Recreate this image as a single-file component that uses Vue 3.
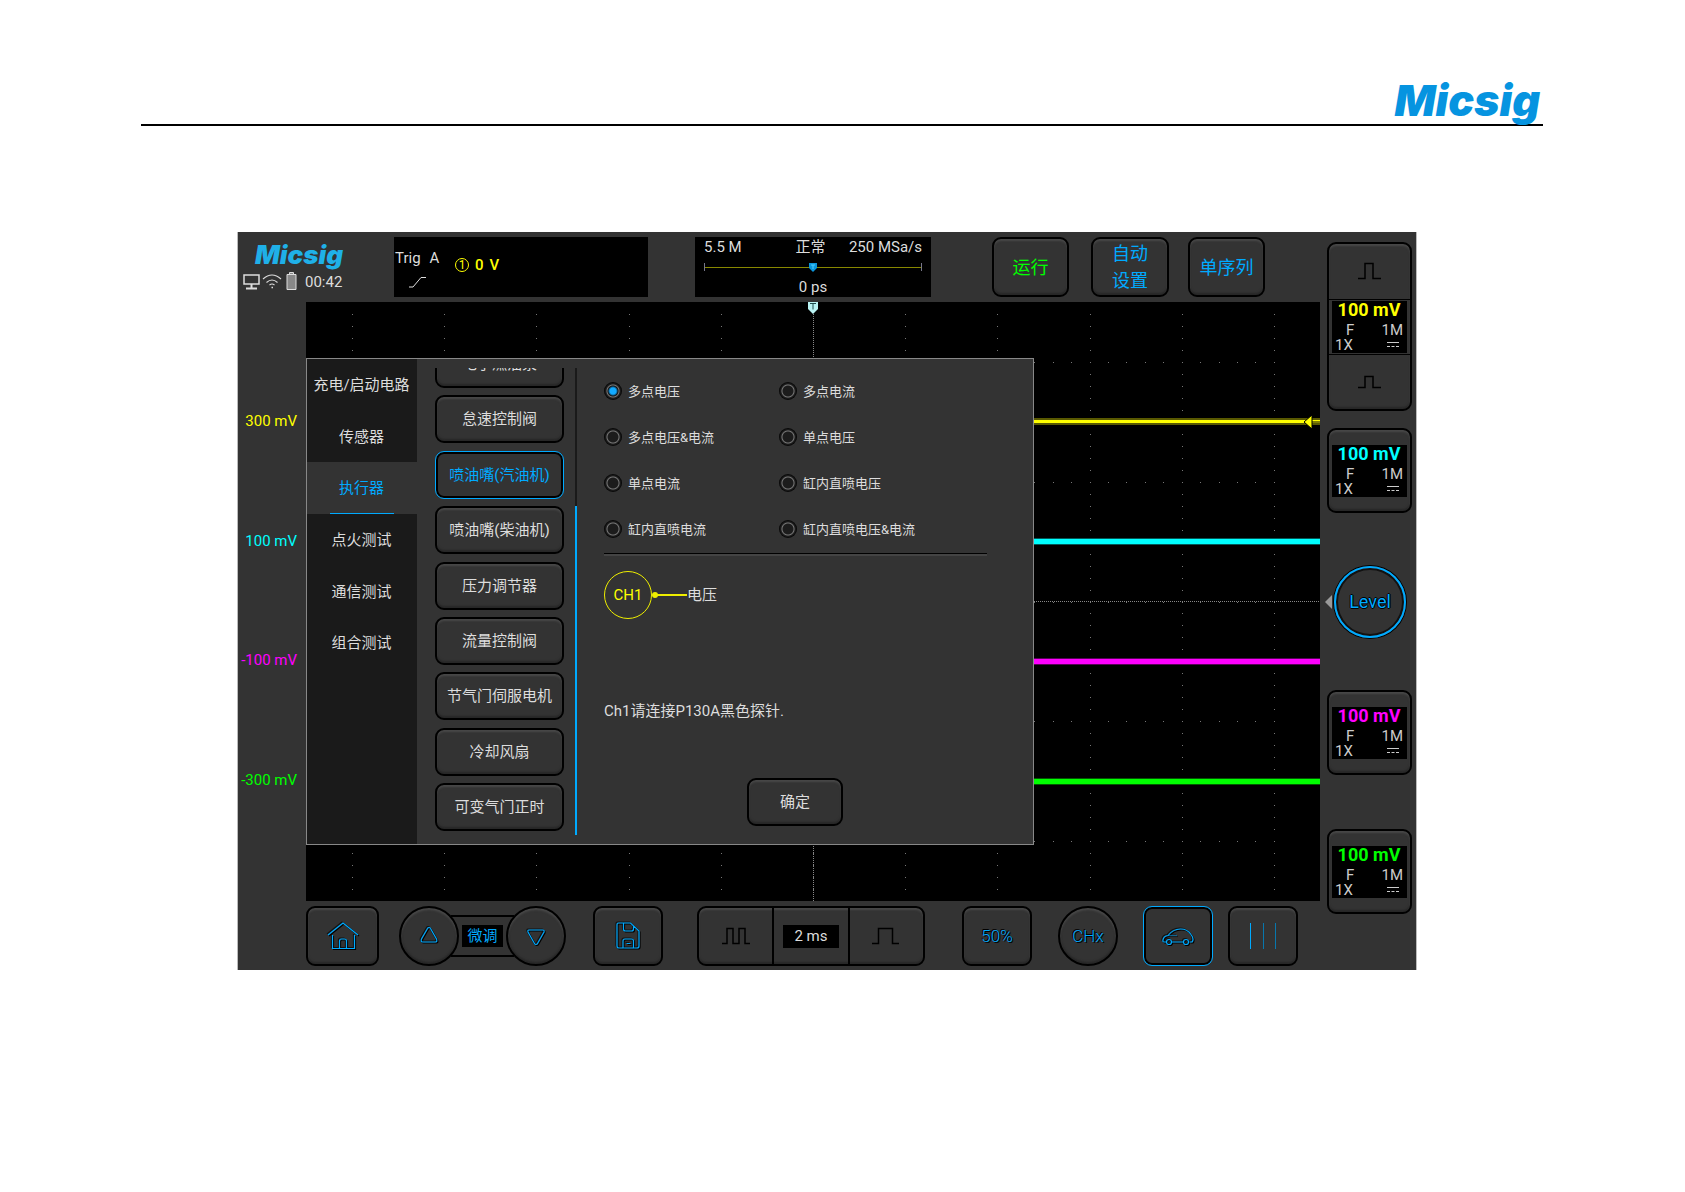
<script setup>
import { ref } from 'vue'

const tabs = ['充电/启动电路', '传感器', '执行器', '点火测试', '通信测试', '组合测试']
const activeTab = ref('执行器')

const actuators = [
  '电子燃油泵', '怠速控制阀', '喷油嘴(汽油机)', '喷油嘴(柴油机)', '压力调节器',
  '流量控制阀', '节气门伺服电机', '冷却风扇', '可变气门正时',
]
const activeActuator = ref('喷油嘴(汽油机)')

const modes = [
  '多点电压', '多点电流', '多点电压&电流', '单点电压',
  '单点电流', '缸内直喷电压', '缸内直喷电流', '缸内直喷电压&电流',
]
const mode = ref('多点电压')

const traces = [
  { label: '300 mV', tone: 'yellow', color: '#ffff00', y: 20 },
  { label: '100 mV', tone: 'cyan', color: '#00ffff', y: 40 },
  { label: '-100 mV', tone: 'magenta', color: '#ff00ff', y: 60 },
  { label: '-300 mV', tone: 'green', color: '#00ff00', y: 80 },
]

// Graticule: 11 columns and 5 rows, five ticks per column and ten per row
const dots = []
for (let row = 0; row < 5; row++) {
  for (let i = 0; i <= 55; i++) {
    dots.push({ x: ((i - 2.5) / 55) * 100, y: row * 20 + 10 })
  }
}
for (let col = 0; col < 11; col++) {
  for (let i = 1; i < 50; i++) {
    dots.push({ x: ((col + 0.5) / 11) * 100, y: i * 2 })
  }
}
</script>

<template>
  <div class="page">
    <header class="page-head">
      <span class="brand">Micsig</span>
    </header>

    <main class="scope">
      <div class="topbar">
        <div class="status">
          <span class="brand brand-small">Micsig</span>
          <div class="status-row">
            <svg width="54" height="20" viewBox="0 0 54 20" fill="none" stroke="#ddd">
              <rect x="1" y="4" width="15" height="9" stroke-width="1.5" />
              <path d="M8.500 13v4M3 17.500h11" stroke-width="2" />
              <path d="M20 8q9-8 18 0M23.500 11.500q5.500-5 11 0M26.500 14q2.500-2 5 0" stroke-width="1.100" />
              <path d="M28.500 16.500h1.500" stroke-width="1.500" />
              <path d="M44 3.500h9v15h-9zM46.500 3V1.500h4V3" fill="#888" />
            </svg>
            <span>00:42</span>
          </div>
        </div>

        <div class="readout trig">
          <div class="trig-mode">
            <span class="trig-name"><span>Trig</span><span>A</span></span>
            <svg width="20" height="12" viewBox="0 0 20 12" fill="none" stroke="#ddd">
              <path d="M1 11h4L13 1.500h5" />
            </svg>
          </div>
          <div class="trig-level">
            <span class="channel-no">1</span><span>0</span><span>V</span>
          </div>
        </div>

        <div class="readout acquire">
          <div class="acquire-row"><span>5.5 M</span><span class="state">正常</span><span>250 MSa/s</span></div>
          <div class="memory-bar">
            <svg width="10" height="9" viewBox="0 0 10 9">
              <path d="M1 0h8v5L5 9 1 5z" fill="#0a96dc" />
              <path d="M3 2h4M5 2v4" stroke="#4fd0ff" fill="none" />
            </svg>
          </div>
          <div class="delay">0 ps</div>
        </div>

        <button class="key top-key run">运行</button>
        <button class="key top-key auto">自动<br>设置</button>
        <button class="key top-key">单序列</button>
      </div>

      <div class="scale">
        <span v-for="t in traces" :key="t.label" :class="t.tone">{{ t.label }}</span>
      </div>

      <section class="plot">
        <svg class="graticule" width="100%" height="100%" shape-rendering="crispEdges">
          <rect v-for="(d, i) in dots" :key="i" :x="d.x + '%'" :y="d.y + '%'" width="1" height="1" fill="#777" />
          <line x1="50%" x2="50%" y1="0" y2="100%" stroke="#888" stroke-dasharray="1 1" />
          <line x1="0" x2="100%" y1="50%" y2="50%" stroke="#888" stroke-dasharray="1 1" />
          <g v-for="t in traces" :key="t.label" :stroke="t.color">
            <line x1="0" x2="100%" :y1="t.y + '%'" :y2="t.y + '%'" stroke-width="7" opacity="0.35" />
            <line x1="0" x2="100%" :y1="t.y + '%'" :y2="t.y + '%'" :stroke-width="t.tone === 'yellow' ? 3 : 5" />
          </g>
        </svg>
        <svg class="trigger-time" width="10" height="12" viewBox="0 0 10 12">
          <path d="M0 0h10v7l-5 5-5-5z" fill="#b9f3f3" />
          <path d="M2 1.500h6M5 1.500v6" stroke="#1c4a4a" fill="none" />
        </svg>
        <svg class="trigger-level" width="16" height="16" viewBox="0 0 16 16">
          <path d="M8 1v14L0 8z" fill="#ff0" stroke="#000" />
          <path d="M8 8h8" stroke="#000" />
        </svg>

        <div class="dialog">
          <nav class="tabs">
            <button
              v-for="t in tabs" :key="t" class="tab" :class="{ on: t === activeTab }"
              @click="activeTab = t"
            >{{ t }}</button>
          </nav>

          <div class="list-view">
            <div class="list">
              <button
                v-for="a in actuators" :key="a" class="key item" :class="{ on: a === activeActuator }"
                @click="activeActuator = a"
              >{{ a }}</button>
            </div>
          </div>
          <div class="scrollbar"><div class="thumb"></div></div>

          <div class="detail">
            <div class="modes" role="radiogroup">
              <label v-for="m in modes" :key="m" class="mode">
                <input v-model="mode" type="radio" name="mode" :value="m">
                <span>{{ m }}</span>
              </label>
            </div>
            <div class="wiring">
              <span class="ch">CH1</span>
              <svg width="36" height="8" viewBox="0 0 36 8">
                <circle cx="4" cy="4" r="3" fill="#eeee00" />
                <path d="M4 4h32" stroke="#eeee00" stroke-width="2" />
              </svg>
              <span>电压</span>
            </div>
            <p class="hint">Ch1请连接P130A黑色探针.</p>
            <button class="key ok">确定</button>
          </div>
        </div>
      </section>

      <aside class="channels">
        <div class="key ch-group">
          <button class="pulse" aria-label="Scale down">
            <svg width="24" height="18" viewBox="0 0 24 18" fill="none" stroke="#000" stroke-width="1.500">
              <path d="M0 16.500h7V1.500h8v15h8" />
            </svg>
          </button>
          <div class="ch-mid">
            <div class="ch-info">
              <b class="yellow">100 mV</b>
              <div class="ch-line"><span>F</span><span>1M</span></div>
              <div class="ch-line coupling"><span>1X</span>
                <svg width="12" height="6" viewBox="0 0 12 6" stroke="#ccc"><path d="M0 .500h12" /><path d="M0 4.500h12" stroke-dasharray="3 1.500" /></svg>
              </div>
            </div>
          </div>
          <button class="pulse" aria-label="Scale up">
            <svg width="24" height="14" viewBox="0 0 24 14" fill="none" stroke="#000" stroke-width="1.500">
              <path d="M0 12.500h7V1.500h8v11h8" />
            </svg>
          </button>
        </div>

        <template v-for="t in traces.slice(1)" :key="t.tone">
          <button class="key ch-button" :class="'at-' + t.tone">
            <span class="ch-info">
              <b :class="t.tone">100 mV</b>
              <span class="ch-line"><span>F</span><span>1M</span></span>
              <span class="ch-line coupling"><span>1X</span>
                <svg width="12" height="6" viewBox="0 0 12 6" stroke="#ccc"><path d="M0 .500h12" /><path d="M0 4.500h12" stroke-dasharray="3 1.500" /></svg>
              </span>
            </span>
          </button>
          <div v-if="t.tone === 'cyan'" class="level-row">
            <svg width="8" height="14" viewBox="0 0 8 14"><path d="M7 0v14L0 7z" fill="#999" /></svg>
            <button class="level">Level</button>
          </div>
        </template>
      </aside>

      <div class="toolbar">
        <button class="key tool home" aria-label="Home">
          <svg class="glyph" width="32" height="30" viewBox="0 0 32 30">
            <path d="M1 14L16 2l15 12M5.500 14v13.500h22V14M12.500 27V20q0-2 2-2h3q2 0 2 2v7" />
          </svg>
        </button>
        <div class="fine">
          <button class="round" aria-label="Up">
            <svg class="glyph" width="20" height="20" viewBox="0 0 20 20"><path d="M10 1.500q1 0 1.500 1L17.500 13q1 3-1 3h-13q-2 0-1-3L8.500 2.500q.5-1 1.500-1z" /></svg>
          </button>
          <div class="fine-bar"><span>微调</span></div>
          <button class="round" aria-label="Down">
            <svg class="glyph down" width="20" height="20" viewBox="0 0 20 20"><path d="M10 16.500q-1 0-1.500-1L2 4q-.5-2 1-2h14q1.500 0 1 2l-6.500 11.500q-.5 1-1.500 1z" /></svg>
          </button>
        </div>
        <button class="key tool save" aria-label="Save">
          <svg class="glyph" width="26" height="30" viewBox="0 0 26 30">
            <path d="M3.500 2h12L24 10v15q0 2-2 2H4q-2 0-2-2V3.500Q2 2 3.500 2zM8.500 2v6q0 2 2 2h6q2 0 2-2V5M8 27v-7q0-2 2-2h6.500q2 0 2 2v7M11.500 22.500h4" />
          </svg>
        </button>
        <div class="key timebase">
          <button aria-label="Slower">
            <svg width="30" height="20" viewBox="0 0 30 20" fill="none" stroke="#000" stroke-width="1.500"><path d="M1 17.500h5V2.500h6v15h6V2.500h6v15h5" /></svg>
          </button>
          <div class="time"><span>2 ms</span></div>
          <button aria-label="Faster">
            <svg width="28" height="20" viewBox="0 0 28 20" fill="none" stroke="#000" stroke-width="1.500"><path d="M0 17.500h6.500V2.500h14v15H27" /></svg>
          </button>
        </div>
        <button class="key tool half">50%</button>
        <button class="round chx">CHx</button>
        <button class="key tool on car" aria-label="Auto test">
          <svg class="glyph" width="34" height="20" viewBox="0 0 34 20">
            <path d="M5.500 16H3q-1.500 0-1-2 .5-4 5-4.500Q12 3 19.500 3q7 0 10.500 5.500Q33.500 13 31 16h-2.500M11 16h11" />
            <path d="M7 9.500h9" opacity=".5" />
            <circle cx="8" cy="16" r="2.500" /><circle cx="25" cy="16" r="2.500" />
          </svg>
        </button>
        <button class="key tool cursors" aria-label="Cursors">
          <svg width="28" height="26" viewBox="0 0 28 26"><path d="M1.500 0v26" stroke="#0af" /><path d="M14.500 0v26M26.500 0v26" stroke="#0877ad" /></svg>
        </button>
      </div>
    </main>
  </div>
</template>

<style>
body { margin: 0; background: #fff; }
</style>

<style scoped>
* { box-sizing: border-box; }
.page { font: 15px/18px Roboto, "Noto Sans CJK SC", sans-serif; color: #ddd; padding: 76px 0 64px; }
button { font: inherit; color: inherit; background: none; border: 0; padding: 0; margin: 0; }
svg { display: block; flex: none; }

.page-head {
  display: flex; justify-content: flex-end; height: 50px; margin: 0 142px 106px 141px;
  padding-right: 3px; border-bottom: 2px solid #000;
}
.brand { font: italic 900 43px/48px Inter, sans-serif; color: #0694e0; }

.scope {
  display: grid; grid-template-columns: 68px minmax(0, 1fr) 96px; grid-template-rows: 70px 1fr 69px;
  margin: 0 268px 0 237px; background: #333; border: solid #bbb; border-width: 0 1px;
}

.key {
  border: 2px solid #000; border-radius: 9px; background: #333;
  box-shadow: inset 0 2px 2px #484848, inset 0 -2px 2px #272727;
}
.key.on { border: 1px solid #0af; box-shadow: inset 0 0 0 2px #000; color: #0af; }

.yellow { color: #ff0; }
.cyan { color: #0ff; }
.magenta { color: #f0f; }
.green { color: #0f0; }

/* top bar */
.topbar { grid-column: 1 / 3; display: flex; align-items: flex-start; padding-top: 5px; }
.status { width: 156px; flex: none; padding: 2px 0 0 5px; }
.brand-small { display: block; font-size: 26px; line-height: 32px; color: #1fb0e8; padding-left: 12px; }
.status-row { display: flex; align-items: center; gap: 8px; height: 20px; }
.status-row span { padding-top: 2px; }
.readout { background: #000; height: 60px; flex: none; }
.trig { width: 254px; margin-right: 47px; display: flex; }
.trig-mode { width: 61px; padding: 12px 0 0 1px; }
.trig-mode svg { margin: 9px 0 0 13px; }
.trig-name { display: flex; gap: 9px; }
.trig-level { display: flex; gap: 6px; align-items: center; height: 56px; color: #ff0; font-weight: 500; }
.channel-no {
  width: 14px; height: 14px; border: 1px solid #ff0; border-radius: 50%;
  font-size: 12px; line-height: 12px; text-align: center; font-weight: 400;
}
.acquire { width: 236px; margin-right: 61px; padding: 1px 9px 0; }
.acquire-row { display: grid; grid-template-columns: 1fr auto 1fr; white-space: nowrap; }
.acquire-row span:last-child { text-align: right; }
.state { padding-right: 5px; }
.memory-bar {
  display: flex; justify-content: center; height: 8px; margin-top: 7px;
  border: solid #778; border-width: 0 1px;
  background: linear-gradient(#880, #880) 0 4px / 100% 1px no-repeat;
}
.delay { text-align: center; margin-top: 7px; }
.top-key { width: 77px; height: 60px; flex: none; font-size: 18px; line-height: 27px; color: #0af; }
.run { color: #0f0; margin-right: 22px; }
.auto { width: 78px; margin-right: 19px; }

/* vertical scale */
.scale { display: flex; flex-direction: column; padding: 59px 0 61px; }
.scale span { flex: 1; display: flex; align-items: center; justify-content: flex-end; padding-right: 9px; }

/* plot */
.plot { position: relative; background: #000; padding: 56px 0; }
.graticule { position: absolute; inset: 0; }
.trigger-time { position: absolute; top: 0; left: calc(50% - 5px); }
.trigger-level { position: absolute; right: 0; top: calc(20% - 8px); }

.dialog {
  position: relative; display: flex; width: 728px; height: 487px;
  background: #333; border: 1px solid #888;
}
.tabs { width: 110px; background: #1a1a1a; display: flex; flex-direction: column; padding-bottom: 175px; }
.tab { position: relative; flex: 1; white-space: nowrap; padding-right: 1px; }
.tab.on { background: #333; color: #0af; }
.tab.on::after {
  content: ""; position: absolute; left: 23px; right: 23px; bottom: 0; height: 1px; background: #0af;
}
.list-view {
  display: flex; flex-direction: column; justify-content: flex-end;
  height: 463px; margin: 9px 0 0 18px; overflow: hidden;
}
.list { display: flex; flex-direction: column; justify-content: space-between; flex: none; height: 491px; }
.item { width: 129px; height: 48px; flex: none; white-space: nowrap; }
.scrollbar { width: 2px; height: 467px; margin: 9px 0 0 11px; background: #1a1a1a; padding-top: 138px; }
.thumb { height: 100%; background: #0af; }
.detail { display: flex; flex-direction: column; width: 383px; margin-left: 27px; padding-top: 9px; }
.modes {
  display: grid; grid-template-columns: 175px 1fr; grid-auto-rows: 46px;
  height: 186px; border-bottom: 1px solid #000; box-shadow: 0 2px 0 #444;
}
.mode { display: flex; align-items: center; gap: 6px; font-size: 13px; white-space: nowrap; }
.mode span { padding-top: 2px; }
.mode input {
  appearance: none; width: 18px; height: 18px; margin: 0; border-radius: 50%; flex: none;
  background: radial-gradient(circle, #1c1c1c 5px, #777 6px, #222 7px, #000 9px);
}
.mode input:checked { background: radial-gradient(circle, #12aaff 3px, #0d6aa0 4px, #111 5px, #777 6px, #222 7px, #000 9px); }
.wiring { display: flex; align-items: center; margin-top: 17px; }
.ch {
  width: 48px; height: 48px; border: 1px solid #ee0; border-radius: 50%;
  line-height: 46px; text-align: center; color: #ff0;
}
.wiring svg { margin-left: -1px; }
.hint { margin: 83px 0 58px; }
.ok { width: 96px; height: 48px; margin-left: 143px; }

/* channel column */
.channels { grid-column: 3; grid-row: 1 / 4; display: flex; flex-direction: column; padding: 10px 4px 0 7px; }
.ch-group { height: 169px; display: flex; flex-direction: column; }
.pulse { flex: 1; display: flex; align-items: center; justify-content: center; }
.ch-mid { padding: 1px 3px; border: solid #000; border-width: 1px 0; }
.ch-info { display: block; height: 52px; background: #000; color: #ccc; padding: 0 4px 0 3px; font-weight: 400; }
.ch-info b { display: block; text-align: center; font-size: 18px; line-height: 18px; padding-bottom: 3px; }
.ch-line { display: flex; justify-content: space-between; padding-left: 11px; line-height: 16px; height: 16px; align-items: center; }
.ch-line.coupling { padding: 0 4px 0 0; height: 15px; }
.ch-button { display: block; height: 85px; padding: 0 3px; text-align: left; }
.at-cyan { margin: 17px 0 53px; }
.at-green { margin: 54px 0 56px; }
.at-magenta { margin-top: 52px; }
.level-row { display: flex; align-items: center; margin-left: -2px; }
.level {
  width: 72px; height: 72px; margin-left: 1px; border: 2px solid #0af; border-radius: 50%;
  box-shadow: 0 0 0 1px #000, inset 0 0 0 2px #111; font-size: 18px; color: #0af;
  text-shadow: 1px 0 #000, -1px 0 #000, 0 1px #000, 0 -1px #000;
}

/* toolbar */
.toolbar { grid-column: 2; display: flex; align-items: flex-start; padding-top: 5px; }
.tool { width: 70px; height: 60px; flex: none; display: flex; align-items: center; justify-content: center; }
.glyph { fill: none; stroke: #0af; stroke-width: 1.2; filter: drop-shadow(1px 1px 0 #000) drop-shadow(-1px -1px 0 #111); }
.home { width: 73px; }
.fine { display: flex; align-items: center; margin-left: 20px; }
.round {
  width: 60px; height: 60px; flex: none; border: 2px solid #000; border-radius: 50%; background: #333;
  box-shadow: inset 0 2px 2px #484848, inset 0 -2px 2px #272727;
  display: flex; align-items: center; justify-content: center; z-index: 1;
}
.down { margin-top: 4px; }
.fine-bar {
  width: 63px; height: 42px; margin: 0 -8px; border: solid #000; border-width: 2px 0;
  display: flex; align-items: center; justify-content: center;
}
.fine-bar span { width: 41px; background: #000; color: #0af; line-height: 22px; text-align: center; }
.save { margin-left: 27px; }
.timebase { display: flex; width: 228px; height: 60px; margin: 0 37px 0 34px; flex: none; }
.timebase > * { flex: 1; display: flex; align-items: center; justify-content: center; }
.time { border: solid #000; border-width: 0 2px; }
.time span { width: 56px; background: #000; line-height: 23px; text-align: center; }
.half, .chx { font-size: 17px; font-weight: 300; color: #0af; text-shadow: 1px 1px #000, -1px -1px #000; }
.chx { margin: 0 25px 0 26px; }
.cursors { margin-left: 15px; }
</style>
